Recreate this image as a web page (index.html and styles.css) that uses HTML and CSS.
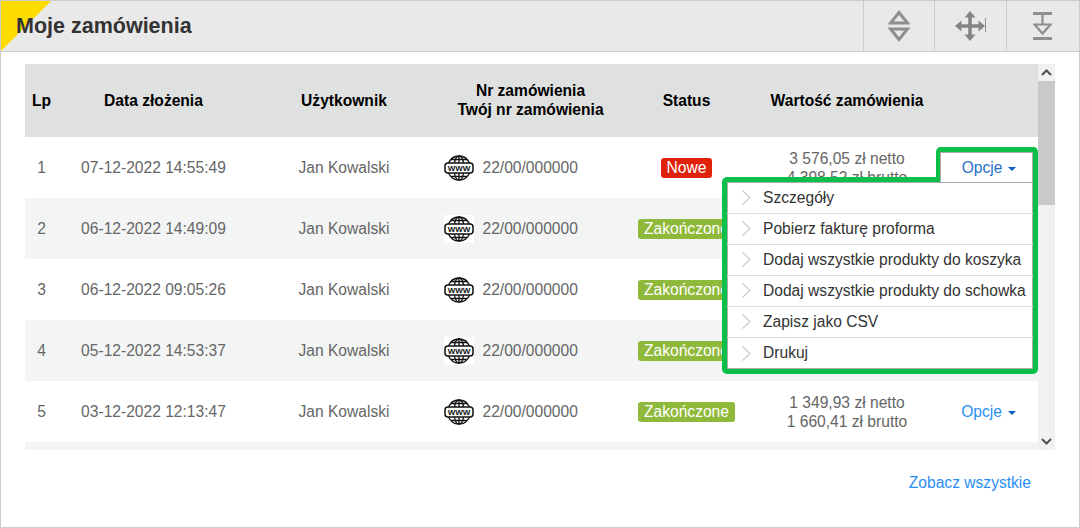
FILE: index.html
```html
<!DOCTYPE html>
<html lang="pl">
<head>
<meta charset="utf-8">
<title>Moje zamówienia</title>
<link rel="stylesheet" href="styles.css">
</head>
<body>
<svg class="defs" width="0" height="0" aria-hidden="true">
  <defs>
    <symbol id="www" viewBox="0 0 30 28">
      <g fill="none" stroke="#111" stroke-width="1.300">
        <path d="M4.500 9C6.500 4.500 10.500 2 15 2s8.500 2.500 10.500 7"/>
        <path d="M4.500 19C6.500 23.500 10.500 26 15 26s8.500-2.500 10.500-7"/>
        <path d="M10.500 9C11 5.500 12.800 2 15 2s4 3.500 4.500 7M10.500 19C11 22.500 12.800 26 15 26s4-3.500 4.500-7"/>
        <path d="M15 2v7M15 19v7M7 5.500h16M7 22.500h16"/>
        <rect x="1" y="9" width="28" height="10" rx="3" stroke-width="1.500"/>
      </g>
      <text x="15" y="17" class="www-text" text-anchor="middle">WWW</text>
    </symbol>
    <symbol id="chev" viewBox="0 0 9 15">
      <path d="M.5.500 8 7.500.5 14.500" fill="none" stroke="#c8c8c8" stroke-width="1.100"/>
    </symbol>
  </defs>
</svg>
<main class="card">
  <header class="head">
    <h1 class="title">Moje zamówienia</h1>
    <div class="tools">
      <div class="tool tool-a">
        <svg width="22" height="32" viewBox="0 0 22 32"><path d="M11 2.500 19.500 13H2.500ZM11 29.500 19.500 19H2.500Z" fill="none" stroke="#8f8f8f" stroke-width="3"/></svg>
      </div>
      <div class="tool">
        <svg width="32" height="30" viewBox="0 0 32 30"><path d="M15 3v24M3 15h25" stroke="#858585" stroke-width="3.600"/><path d="M15 0l5.500 6.500h-11ZM15 30l-5.500-6.500h11ZM0 15l6.500-5.500v11ZM30 15l-6.500-5.500v11Z" fill="#858585"/><path d="M30.500 7v14" stroke="#8f8f8f" stroke-width="1"/></svg>
      </div>
      <div class="tool tool-c">
        <svg width="20" height="28" viewBox="0 0 20 28"><path d="M0 1.500h19M0 26.500h19" stroke="#8f8f8f" stroke-width="3"/><path d="M9.500 3v9M1.500 12.500h16L9.500 21.500Z" fill="none" stroke="#8f8f8f" stroke-width="2.200"/></svg>
      </div>
    </div>
  </header>
  <section class="panel">
    <div class="scroller">
      <div class="viewport">
        <table class="orders">
          <thead>
            <tr>
              <th class="c-lp">Lp</th>
              <th class="c-date">Data złożenia</th>
              <th class="c-user">Użytkownik</th>
              <th class="c-nr">Nr zamówienia<br>Twój nr zamówienia</th>
              <th class="c-status">Status</th>
              <th class="c-value">Wartość zamówienia</th>
              <th class="c-opt"></th>
            </tr>
          </thead>
          <tbody>
            <tr>
              <td>1</td><td>07-12-2022 14:55:49</td><td>Jan Kowalski</td>
              <td><div class="nr"><svg class="globe" width="30" height="28"><use href="#www"/></svg>22/00/000000</div></td>
              <td><span class="badge badge-new">Nowe</span></td>
              <td>3 576,05 zł netto<br>4 398,52 zł brutto</td><td></td>
            </tr>
            <tr>
              <td>2</td><td>06-12-2022 14:49:09</td><td>Jan Kowalski</td>
              <td><div class="nr"><svg class="globe" width="30" height="28"><use href="#www"/></svg>22/00/000000</div></td>
              <td><span class="badge badge-done">Zakończone</span></td><td></td><td></td>
            </tr>
            <tr>
              <td>3</td><td>06-12-2022 09:05:26</td><td>Jan Kowalski</td>
              <td><div class="nr"><svg class="globe" width="30" height="28"><use href="#www"/></svg>22/00/000000</div></td>
              <td><span class="badge badge-done">Zakończone</span></td><td></td><td></td>
            </tr>
            <tr>
              <td>4</td><td>05-12-2022 14:53:37</td><td>Jan Kowalski</td>
              <td><div class="nr"><svg class="globe" width="30" height="28"><use href="#www"/></svg>22/00/000000</div></td>
              <td><span class="badge badge-done">Zakończone</span></td><td></td><td></td>
            </tr>
            <tr>
              <td>5</td><td>03-12-2022 12:13:47</td><td>Jan Kowalski</td>
              <td><div class="nr"><svg class="globe" width="30" height="28"><use href="#www"/></svg>22/00/000000</div></td>
              <td><span class="badge badge-done">Zakończone</span></td>
              <td>1 349,93 zł netto<br>1 660,41 zł brutto</td>
              <td><a class="opt opt-row" href="#">Opcje<i class="caret"></i></a></td>
            </tr>
            <tr><td colspan="7"></td></tr>
          </tbody>
        </table>
      </div>
      <div class="scrollbar">
        <div class="sb-btn"><svg width="11" height="7" viewBox="0 0 11 7"><path d="M1 6l4.500-4.500L10 6" fill="none" stroke="#505050" stroke-width="2"/></svg></div>
        <div class="sb-thumb"></div>
        <div class="sb-rest"></div>
        <div class="sb-btn"><svg width="11" height="7" viewBox="0 0 11 7"><path d="M1 1l4.500 4.500L10 1" fill="none" stroke="#505050" stroke-width="2"/></svg></div>
      </div>
    </div>
    <div class="menu-btn"><a class="opt opt-open" href="#">Opcje<i class="caret"></i></a></div>
    <ul class="menu">
      <li><svg class="chev" width="9" height="15"><use href="#chev"/></svg>Szczegóły</li>
      <li><svg class="chev" width="9" height="15"><use href="#chev"/></svg>Pobierz fakturę proforma</li>
      <li><svg class="chev" width="9" height="15"><use href="#chev"/></svg>Dodaj wszystkie produkty do koszyka</li>
      <li><svg class="chev" width="9" height="15"><use href="#chev"/></svg>Dodaj wszystkie produkty do schowka</li>
      <li><svg class="chev" width="9" height="15"><use href="#chev"/></svg>Zapisz jako CSV</li>
      <li><svg class="chev" width="9" height="15"><use href="#chev"/></svg>Drukuj</li>
    </ul>
  </section>
  <footer class="foot"><a href="#" class="all">Zobacz wszystkie</a></footer>
</main>
</body>
</html>
```
FILE: styles.css
```css
* { box-sizing: border-box; }
html, body { margin: 0; padding: 0; }
body {
  width: 1080px;
  height: 528px;
  overflow: hidden;
  background: #fff;
  font-family: "Liberation Sans", Arial, sans-serif;
  font-size: 15.6px;
  color: #666;
}
a { text-decoration: none; }
.defs { position: absolute; }
.www-text { font: bold 8px "Liberation Sans", sans-serif; fill: #111; }

.card {
  position: relative;
  height: 528px;
  border: 1px solid #ccc;
  display: flex;
  flex-direction: column;
}
.head {
  position: relative;
  height: 51px;
  flex: none;
  display: flex;
  align-items: stretch;
  justify-content: space-between;
  background: #e9e9e9;
  border-bottom: 1px solid #ccc;
}
.head::before {
  content: "";
  position: absolute;
  left: 0;
  top: 0;
  border-top: 50px solid #ffdc00;
  border-right: 50px solid transparent;
}
.title {
  position: relative;
  margin: 0;
  padding-left: 15px;
  font-size: 21.5px;
  line-height: 50px;
  font-weight: bold;
  color: #333;
}
.tools { display: flex; }
.tool {
  width: 72px;
  display: flex;
  align-items: center;
  justify-content: center;
  border-left: 1px solid #ccc;
}
.tool-a { width: 71px; }
.tool-c { width: 73px; }

.panel {
  position: relative;
  flex: none;
  padding: 12px 24px 0;
}
.scroller {
  display: flex;
  height: 386px;
}
.viewport {
  width: 1013px;
  overflow: hidden;
}
.orders {
  width: 1013px;
  table-layout: fixed;
  border-collapse: collapse;
}
.orders th {
  height: 73px;
  padding: 0;
  background: #dfe1e0;
  color: #000;
  font-size: 15.6px;
  line-height: 19px;
  font-weight: bold;
  text-align: center;
}
.orders td {
  height: 61px;
  padding: 0;
  text-align: center;
  line-height: 19px;
}
.orders tbody tr:nth-child(even) { background: #f3f5f4; }
.c-lp { width: 33px; }
.c-date { width: 191px; }
.c-user { width: 190px; }
.orders .c-nr { width: 183px; padding-bottom: 2px; }
.c-status { width: 129px; }
.c-value { width: 192px; }
.c-opt { width: 95px; }
.nr {
  display: flex;
  align-items: center;
  gap: 8.5px;
  padding-left: 5px;
}
.globe { background: #fff; flex: none; }
.badge {
  display: inline-block;
  height: 20px;
  padding: 0 6px;
  border-radius: 3px;
  color: #fff;
  line-height: 20px;
  vertical-align: middle;
}
.badge-new { background: #e0220d; }
.badge-done { background: #8fb93a; }
.opt { color: #2a8ff5; }
.opt-row { position: relative; left: -2px; }
.opt-open { color: #2470c8; }
.caret {
  display: inline-block;
  margin-left: 6px;
  vertical-align: middle;
  border-top: 4px solid #0d5cbf;
  border-left: 4px solid transparent;
  border-right: 4px solid transparent;
}

.scrollbar {
  width: 17px;
  display: flex;
  flex-direction: column;
  background: #f1f1f1;
}
.sb-btn {
  height: 17px;
  flex: none;
  display: flex;
  align-items: center;
  justify-content: center;
}
.sb-thumb { height: 124px; flex: none; background: #c9c9c9; }
.sb-rest { flex: 1; }

.menu-btn {
  position: absolute;
  z-index: 2;
  left: 935px;
  top: 95px;
  width: 102px;
  height: 35px;
  padding-left: 5px;
  background: #fff;
  border: solid #0bbf48;
  border-width: 5px 5px 0 4px;
  border-radius: 5px 5px 0 0;
  text-align: center;
  line-height: 31px;
  box-shadow: inset 1px 1px 0 #aaa, inset -1px 0 0 #aaa;
}
.menu {
  position: absolute;
  z-index: 1;
  left: 721px;
  top: 125px;
  width: 316px;
  height: 197px;
  margin: 0;
  padding: 1px 0 0;
  list-style: none;
  background: #fff;
  border: 5px solid #0bbf48;
  border-radius: 5px;
  color: #333;
  box-shadow: inset 0 1px 0 #aaa, inset 0 -1px 0 #aaa, inset 1px 0 0 #aaa, inset -1px 0 0 #aaa;
}
.menu li {
  height: 31px;
  display: flex;
  align-items: center;
  gap: 12px;
  padding: 0 0 1px 15px;
  white-space: nowrap;
  border-bottom: 1px solid #ddd;
}
.menu li:last-child { border-bottom: 0; }
.chev { flex: none; }

.foot {
  display: flex;
  justify-content: flex-end;
  padding: 23px 48px 0 0;
}
.all { color: #2a8ff5; line-height: 19px; }
```
